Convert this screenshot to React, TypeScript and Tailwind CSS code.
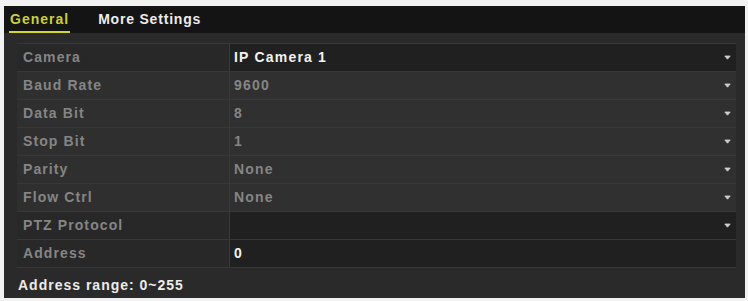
import React from 'react'

type Row = {
  label: string
  value: string
  kind: 'select' | 'input'
  dark?: boolean
  active?: boolean
}

const rows: Row[] = [
  { label: 'Camera', value: 'IP Camera 1', kind: 'select', dark: true, active: true },
  { label: 'Baud Rate', value: '9600', kind: 'select' },
  { label: 'Data Bit', value: '8', kind: 'select' },
  { label: 'Stop Bit', value: '1', kind: 'select' },
  { label: 'Parity', value: 'None', kind: 'select' },
  { label: 'Flow Ctrl', value: 'None', kind: 'select' },
  { label: 'PTZ Protocol', value: '', kind: 'select', dark: true },
  { label: 'Address', value: '0', kind: 'input', dark: true, active: true },
]

function Caret() {
  return (
    <svg width="7" height="5" viewBox="0 0 7 5" className="shrink-0">
      <path d="M0.8 1 L6.2 1 L3.5 4.2 Z" fill="#cfcfcf" stroke="#cfcfcf" strokeWidth="0.8" strokeLinejoin="round" />
    </svg>
  )
}

export default function App() {
  return (
    <div className="w-[748px] h-[301px] bg-[#f2f2f2] pt-[6px] pl-[4px] pr-[3px] pb-[3px] font-['Liberation_Sans',Arial,sans-serif]">
      <div className="h-full bg-[#2a2a2a] flex flex-col">
        {/* Tabs */}
        <div className="h-[27px] bg-[#141414] flex items-end gap-[28px] pl-[5px]">
          <div className="pb-[3px] border-b-2 border-[#d4d62a] text-[14px] leading-[18px] font-bold tracking-[1px] text-[#c9cf3a] px-[1px]">
            General
          </div>
          <div className="pb-[5px] text-[14px] leading-[18px] font-bold tracking-[0.8px] text-[#ececec]">
            More Settings
          </div>
        </div>

        {/* Table */}
        <div className="mt-[10px] ml-[13px] mr-[9px] flex flex-col border-t border-[#383838]">
          {rows.map((r) => (
            <div
              key={r.label}
              className={`h-[28px] flex border-b border-[#383838] ${r.dark ? 'bg-[#202020]' : 'bg-[#303030]'}`}
            >
              <div
                className={`w-[213px] border-r border-[#3a3a3a] flex items-center pl-[6px] text-[14px] font-bold tracking-[1.1px] text-[#858585] ${r.dark ? 'bg-[#282828]' : 'bg-[#2f2f2f]'}`}
              >
                {r.label}
              </div>
              <div className="flex-1 flex items-center justify-between pl-[4px] pr-[5px]">
                <span
                  className={`text-[14px] font-bold tracking-[1.2px] ${r.active ? 'text-[#f2f2f2]' : 'text-[#858585]'}`}
                >
                  {r.value}
                </span>
                {r.kind === 'select' && <Caret />}
              </div>
            </div>
          ))}
        </div>

        <div className="mt-[7px] pl-[14px] text-[14px] font-bold tracking-[1px] text-[#ececec]">
          Address range: 0~255
        </div>
      </div>
    </div>
  )
}
